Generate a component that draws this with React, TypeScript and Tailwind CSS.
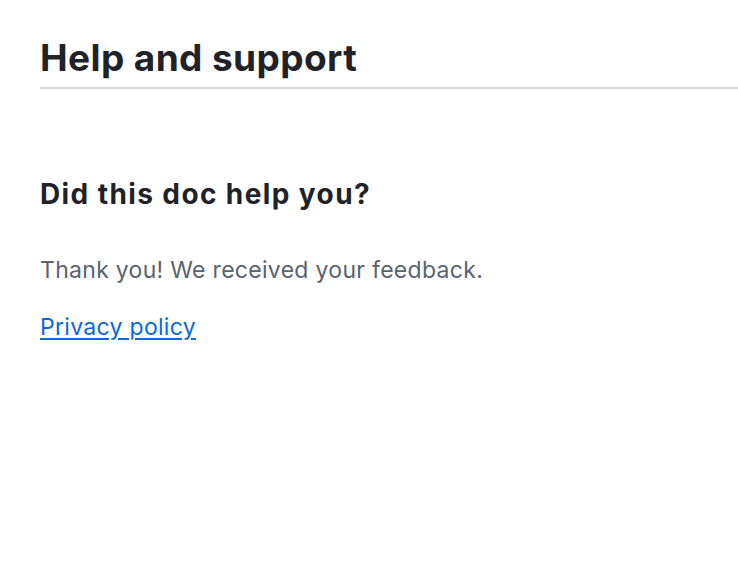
export default function App() {
    return (
        <div className="min-h-[578px] bg-white pl-10 pt-[36px] font-['Inter',sans-serif] text-[#1f2328]">
            <h2 className="border-b-2 border-[#d5d9e3] pb-[7px] text-[37px] font-bold leading-[44px] tracking-[0.4px]">
                Help and support
            </h2>
            <div className="pt-[88px]">
                <h3 className="text-[28px] font-bold leading-[34px] tracking-[1.4px]">Did this doc help you?</h3>
                <p className="mt-[43px] text-[23px] leading-[32px] tracking-[0.3px] text-[#59636e]">
                    Thank you! We received your feedback.
                </p>
                <p className="mt-[25px] text-[23px] leading-[32px] tracking-[0.3px]">
                    <a href="#" className="text-[#0969da] underline decoration-[1.5px] underline-offset-[3px]">
                        Privacy policy
                    </a>
                </p>
            </div>
        </div>
    );
}
